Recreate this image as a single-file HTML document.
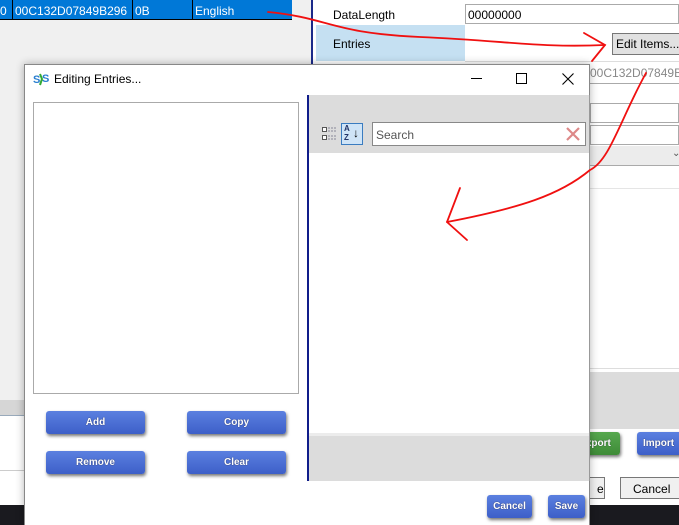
<!DOCTYPE html>
<html><head><meta charset="utf-8"><style>
*{margin:0;padding:0;box-sizing:border-box}
body{width:679px;height:525px;overflow:hidden;position:relative;background:#fff;font-family:"Liberation Sans",sans-serif;font-size:12px;color:#000}
.a{position:absolute;white-space:nowrap}
.btn{position:absolute;background:linear-gradient(#5b80e0,#3d5fc8);border-radius:3px;color:#fff;font-weight:bold;font-size:10px;text-align:center;box-shadow:1px 2px 3px rgba(0,0,0,.55);text-shadow:0 0 1px #223;white-space:nowrap}
</style></head><body>
<div class="a" style="left:0;top:0;width:312px;height:400px;background:#f0f0f0"></div>
<div class="a" style="left:0;top:0;width:292px;height:20px;background:#0078d7;color:#fff;font-size:12px;line-height:22px;border-bottom:1px solid #000">
<span class="a" style="left:0">0</span><span class="a" style="left:12px;top:0;height:20px;border-left:1px solid #000;padding-left:2px">00C132D07849B296</span><span class="a" style="left:132px;height:20px;border-left:1px solid #000;padding-left:2px">0B</span><span class="a" style="left:192px;height:20px;border-left:1px solid #000;padding-left:2px">English</span></div>
<div class="a" style="left:0;top:400px;width:312px;height:15px;background:#d6d6d6"></div>
<div class="a" style="left:0;top:415px;width:312px;height:1px;background:#9ab"></div>
<div class="a" style="left:0;top:470px;width:312px;height:1px;background:#ccc"></div>
<div class="a" style="left:0;top:505px;width:679px;height:20px;background:#1a1a1f"></div>
<div class="a" style="left:311px;top:0;width:2px;height:505px;background:#1b2a8a"></div>
<div class="a" style="left:313px;top:0;width:366px;height:505px;background:#fff"></div>
<div class="a" style="left:316px;top:25px;width:149px;height:36px;background:#c5e0f2"></div>
<div class="a" style="left:333px;top:8px">DataLength</div>
<div class="a" style="left:465px;top:4px;width:214px;height:20px;border:1px solid #aaa;padding:3px 2px">00000000</div>
<div class="a" style="left:333px;top:37px">Entries</div>
<div class="a" style="left:612px;top:33px;width:70px;height:22px;background:#e1e1e1;border:1px solid #777;padding:3px 3px;font-size:12px">Edit Items...</div>
<div class="a" style="left:465px;top:61px;width:214px;height:1px;background:#ddd"></div>
<div class="a" style="left:590px;top:66px;color:#888">00C132D07849B2</div>
<div class="a" style="left:590px;top:83px;width:89px;height:1px;background:#aaa"></div>
<div class="a" style="left:590px;top:103px;width:89px;height:20px;border:1px solid #aaa"></div>
<div class="a" style="left:590px;top:125px;width:89px;height:20px;border:1px solid #aaa"></div>
<div class="a" style="left:590px;top:146px;width:89px;height:20px;background:#ececec;border-bottom:1px solid #aaa"></div>
<div class="a" style="left:672px;top:148px;font-size:10px;color:#555">⌄</div>
<div class="a" style="left:590px;top:188px;width:89px;height:1px;background:#e5e5e5"></div>
<div class="a" style="left:590px;top:368px;width:89px;height:1px;background:#ddd"></div>
<div class="a" style="left:590px;top:372px;width:89px;height:57px;background:#dcdcdc"></div>
<div class="btn" style="left:570px;top:432px;width:50px;height:23px;background:linear-gradient(#56a84e,#3f8b38);line-height:23px">Export</div>
<div class="btn" style="left:637px;top:432px;width:50px;height:23px;line-height:23px;text-align:left;padding-left:6px">Import</div>
<div class="a" style="left:560px;top:477px;width:45px;height:22px;border:1px solid #777;background:#f0f0f0;padding:4px 0 0 36px">e</div>
<div class="a" style="left:620px;top:477px;width:60px;height:22px;border:1px solid #777;background:#f0f0f0;padding:4px 0 0 12px">Cancel</div>
<div class="a" style="left:24px;top:64px;width:566px;height:461px;background:#fff;border:1px solid #888;border-bottom:none;box-shadow:0 0 8px rgba(0,0,0,.3)"></div>
<svg class="a" style="left:33px;top:71px" width="18" height="16" viewBox="0 0 18 16"><text x="0" y="12" font-size="11" font-weight="bold" fill="#2a7fd0" font-family="Liberation Sans">S</text><text x="9" y="11" font-size="11" font-weight="bold" fill="#2a7fd0" font-family="Liberation Sans">S</text><path d="M7 3 L9 8 L7 14" stroke="#3a3" stroke-width="2" fill="none"/></svg>
<div class="a" style="left:54px;top:72px;font-size:12px">Editing Entries...</div>
<div class="a" style="left:471px;top:78px;width:11px;height:1px;background:#000"></div>
<div class="a" style="left:516px;top:73px;width:11px;height:11px;border:1px solid #000"></div>
<svg class="a" style="left:562px;top:73px" width="12" height="12"><path d="M0.5 0.5L11.5 11.5M11.5 0.5L0.5 11.5" stroke="#000" stroke-width="1.1"/></svg>
<div class="a" style="left:33px;top:102px;width:266px;height:292px;border:1px solid #aaa;background:#fff"></div>
<div class="btn" style="left:46px;top:411px;width:99px;height:23px;line-height:23px">Add</div>
<div class="btn" style="left:187px;top:411px;width:99px;height:23px;line-height:23px">Copy</div>
<div class="btn" style="left:46px;top:451px;width:99px;height:23px;line-height:23px">Remove</div>
<div class="btn" style="left:187px;top:451px;width:99px;height:23px;line-height:23px">Clear</div>
<div class="btn" style="left:487px;top:495px;width:45px;height:23px;line-height:23px">Cancel</div>
<div class="btn" style="left:548px;top:495px;width:37px;height:23px;line-height:23px">Save</div>
<div class="a" style="left:307px;top:95px;width:2px;height:386px;background:#101d8a"></div>
<div class="a" style="left:309px;top:95px;width:280px;height:58px;background:#dcdcdc"></div>
<div class="a" style="left:309px;top:433px;width:280px;height:3px;background:#ececec"></div>
<div class="a" style="left:309px;top:436px;width:280px;height:45px;background:#dcdcdc"></div>
<div class="a" style="left:589px;top:95px;width:1px;height:386px;background:#999"></div>
<svg class="a" style="left:322px;top:125px" width="16" height="18"><rect x="0.5" y="2.5" width="4" height="4" fill="#fff" stroke="#555"/><rect x="0.5" y="10.5" width="4" height="4" fill="#fff" stroke="#555"/><path d="M6 3h9M6 6h9M6 11h9M6 14h9" stroke="#889" stroke-dasharray="2 1"/></svg>
<div class="a" style="left:341px;top:123px;width:22px;height:22px;border:1px solid #3a7cc0;background:#cfe4f7"></div>
<div class="a" style="left:344px;top:124px;font-size:8px;line-height:9px;color:#236;font-weight:bold">A<br>Z</div>
<div class="a" style="left:353px;top:126px;font-size:12px;color:#000">↓</div>
<div class="a" style="left:372px;top:122px;width:214px;height:24px;border:1px solid #888;background:#fff;padding:5px 3px;color:#555">Search</div>
<svg class="a" style="left:566px;top:127px" width="14" height="14"><path d="M1 1L13 13M13 1L1 13" stroke="#d88" stroke-width="2.2"/></svg>
<svg class="a" style="left:0;top:0" width="679" height="525"><g stroke="#f01010" stroke-width="1.8" fill="none" stroke-linecap="round">
<path d="M268 12 C 330 18, 330 33, 420 37 S 540 48, 605 45"/>
<path d="M584 33 L605 45 L592 61"/>
<path d="M646 73 C 620 120, 610 160, 590 170 C 560 195, 520 208, 447 222"/>
<path d="M460 188 L447 222 L467 240"/>
</g></svg>
</body></html>
